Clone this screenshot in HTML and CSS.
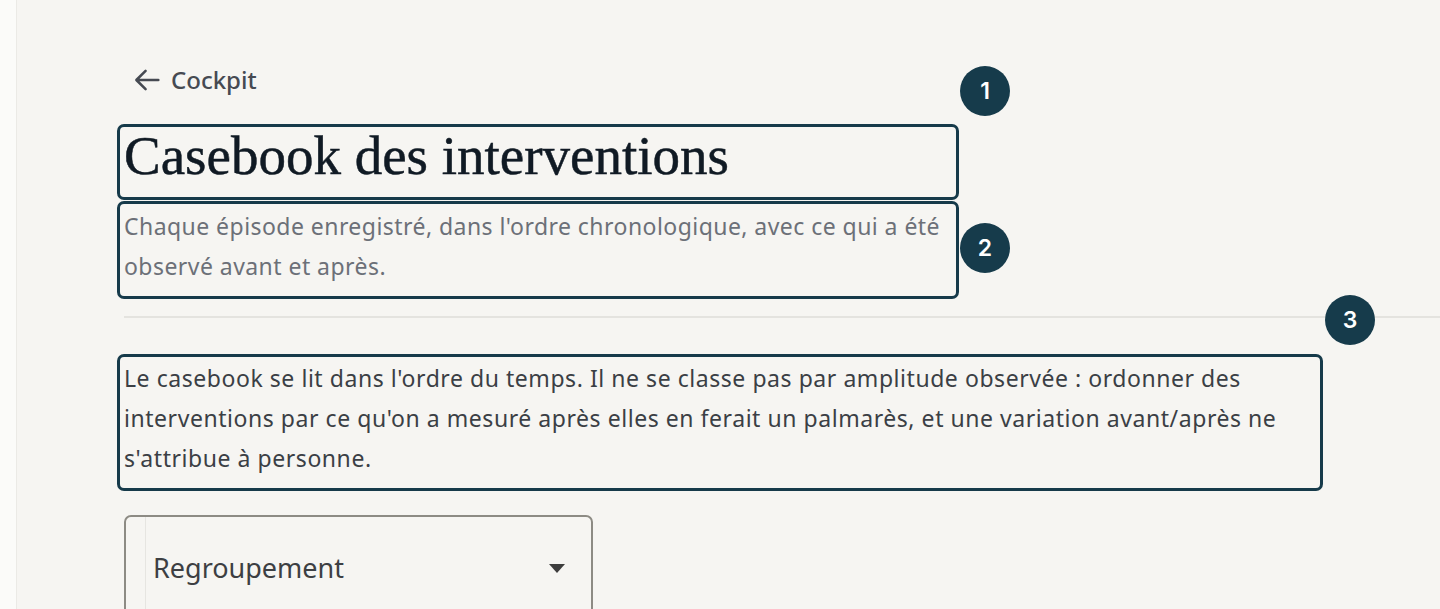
FILE: index.html
```html
<!DOCTYPE html>
<html lang="fr">
<head>
<meta charset="utf-8">
<title>Casebook des interventions</title>
<link rel="stylesheet" href="styles.css">
</head>
<body>
<div class="app">
  <aside class="rail"></aside>
  <main class="main">
    <a class="back" href="#">
      <svg class="back-icon" viewBox="0 0 24 24" aria-hidden="true"><path d="M20 12H5M11 5.5L4.5 12l6.5 6.5" fill="none" stroke="currentColor" stroke-width="1.8" stroke-linecap="round" stroke-linejoin="round"/></svg>
      <span>Cockpit</span>
    </a>
    <header class="head">
      <div class="anno-wrap">
        <h1 class="title hl">Casebook des interventions</h1>
        <span class="badge badge-1">1</span>
      </div>
      <div class="anno-wrap">
        <p class="subtitle hl">Chaque épisode enregistré, dans l'ordre chronologique, avec ce qui a été observé avant et après.</p>
        <span class="badge badge-2">2</span>
      </div>
    </header>
    <div class="rule-wrap">
      <hr class="rule">
      <span class="badge badge-3">3</span>
    </div>
    <p class="note hl">Le casebook se lit dans l'ordre du temps. Il ne se classe pas par amplitude observée : ordonner des interventions par ce qu'on a mesuré après elles en ferait un palmarès, et une variation avant/après ne s'attribue à personne.</p>
    <div class="select">
      <span class="select-notch"></span>
      <span class="select-label">Regroupement</span>
      <span class="select-caret"></span>
    </div>
  </main>
</div>
</body>
</html>
```
FILE: styles.css
```css
* { box-sizing: border-box; }
html, body { margin: 0; padding: 0; height: 100%; }
body {
  background: #f6f5f2;
  font-family: "Noto Sans", "Liberation Sans", sans-serif;
  color: #3b3f45;
  overflow: hidden;
}
.app { display: flex; min-height: 100%; }
.rail {
  width: 17px;
  flex: none;
  background: #fbfbf9;
  border-right: 1px solid #ebeae6;
}
.main {
  flex: 1;
  padding: 64px 0 0 103px;
  min-width: 0;
}
.back {
  display: flex;
  width: max-content;
  align-items: center;
  gap: 7px;
  color: #464a52;
  text-decoration: none;
  font-size: 24px;
  line-height: 32px;
  font-weight: 500;
  margin-left: 10px;
  height: 32px;
}
.back-icon { width: 34px; height: 34px; flex: none; }
.head { width: 836px; margin-top: 31px; }
.anno-wrap { position: relative; }
.hl {
  outline: 3px solid #163a4a;
  outline-offset: 0;
  border-radius: 4px;
}
.title {
  margin: 0;
  font-family: "Liberation Serif", "DejaVu Serif", serif;
  font-weight: 400;
  font-size: 55px;
  line-height: 58px;
  color: #101a24;
  padding: 0 4px 12px;
  letter-spacing: 0;
  -webkit-text-stroke: 0.5px #101a24;
}
.subtitle {
  margin: 7px 0 0;
  font-size: 23px;
  line-height: 40px;
  letter-spacing: 0.45px;
  color: #6c7078;
  padding: 2px 4px 10px;
}
.badge {
  position: absolute;
  width: 50px;
  height: 50px;
  border-radius: 50%;
  background: #163b4b;
  color: #fff;
  font-family: "Inter", "Liberation Sans", sans-serif;
  font-weight: 600;
  font-size: 23px;
  display: flex;
  align-items: center;
  justify-content: center;
}
.badge-1 { left: 840px; top: -61px; }
.badge-2 { left: 840px; top: 19px; }
.rule-wrap { position: relative; margin-top: 20px; }
.rule { border: 0; border-top: 2px solid #e4e3df; margin: 0 0 0 4px; }
.badge-3 { left: 1205px; top: -21px; }
.note {
  width: 1200px;
  margin: 39px 0 0;
  font-size: 23px;
  line-height: 40px;
  letter-spacing: 0.55px;
  color: #3b3f45;
  padding: 1px 4px 10px;
}
.select {
  position: relative;
  width: 469px;
  height: 120px;
  margin-top: 27px;
  margin-left: 4px;
  border: 2px solid #8d8b84;
  border-radius: 7px;
  display: flex;
  align-items: flex-start;
  padding: 33px 26px 0 27px;
}
.select-notch {
  position: absolute;
  left: 19px;
  top: 0;
  bottom: 0;
  border-left: 1px solid #e6e5e1;
}
.select-label {
  flex: 1;
  font-size: 27px;
  color: #3d3f43;
  line-height: 36px;
}
.select-caret {
  width: 0; height: 0;
  margin-top: 14px;
  border-left: 8px solid transparent;
  border-right: 8px solid transparent;
  border-top: 9px solid #3d3d3d;
}
```
